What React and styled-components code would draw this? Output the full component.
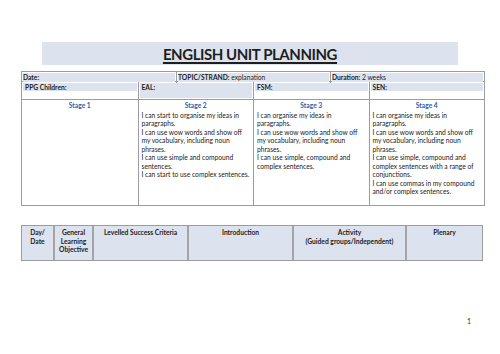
import styled, { createGlobalStyle } from "styled-components";

const GlobalStyle = createGlobalStyle`
  html, body {
    margin: 0;
    padding: 0;
    background: #fff;
  }
  body {
    font-family: Lato, "Liberation Sans", sans-serif;
    color: #222;
  }
`;

const SHADE = "#dce3ef";
const LINE = "#9c9c9c";

const Page = styled.div`
  width: 500px;
  height: 354px;
  box-sizing: border-box;
  padding: 42px 15px 0 21px;
  display: flex;
  flex-direction: column;
`;

const TitleBar = styled.div`
  margin-left: 21px;
  width: 416px;
  height: 23px;
  background: ${SHADE};
  display: flex;
  align-items: center;
  justify-content: center;
`;

const Title = styled.h1`
  margin: 0;
  font-size: 15px;
  font-weight: 700;
  color: #1e1e1e;
  text-decoration: underline;
  text-decoration-thickness: 1.5px;
  text-underline-offset: 2px;
  letter-spacing: -0.45px;
`;

const TopTable = styled.div`
  margin-top: 6px;
  width: 464px;
  box-sizing: border-box;
  border: 1px solid ${LINE};
  font-size: 6.7px;
  line-height: 8.5px;
`;

const Row = styled.div`
  display: grid;
  grid-template-columns: repeat(${({ $cols }) => $cols}, 1fr);
  height: ${({ $h }) => $h}px;
  & + & {
    border-top: 1px solid ${LINE};
  }
`;

const Cell = styled.div`
  box-sizing: border-box;
  padding: 1px;
  background: ${({ $fill }) => ($fill ? SHADE : "transparent")};
  background-clip: content-box;
  & + & {
    border-left: 1px solid ${LINE};
  }
`;

const ShadeLine = styled.div`
  background: ${SHADE};
  padding: 0 2px;
  height: 8px;
  line-height: 8px;
  white-space: nowrap;
`;

const FullShade = styled.div`
  background: ${SHADE};
  height: 100%;
  padding: 0 2px;
  line-height: 8px;
`;

const Label = styled.b`
  font-weight: 700;
`;

const StageCell = styled.div`
  box-sizing: border-box;
  padding: 1px 3px;
  & + & {
    border-left: 1px solid ${LINE};
  }
`;

const StageHead = styled.div`
  text-align: center;
  font-weight: 700;
  color: #2e5ea8;
  margin-bottom: 1px;
`;

const TextLine = styled.div`
  white-space: nowrap;
`;

const BottomTable = styled.div`
  margin-top: 19px;
  width: 462px;
  height: 36px;
  box-sizing: border-box;
  border: 1px solid ${LINE};
  display: grid;
  grid-template-columns: 31px 39px 95px 105px 113px 1fr;
  font-size: 6.7px;
  line-height: 8.5px;
`;

const HeadCell = styled.div`
  background: ${SHADE};
  font-weight: 700;
  text-align: center;
  padding: 2px 2px 0;
  & + & {
    border-left: 2px solid #a4a4a4;
  }
`;

const PageNumber = styled.div`
  margin-top: 56px;
  align-self: flex-end;
  margin-right: 14px;
  font-size: 7px;
  color: #333;
`;

const stages = [
  { title: "Stage 1", lines: [] },
  {
    title: "Stage 2",
    lines: [
      "I can start to organise my ideas in",
      "paragraphs.",
      "I can use wow words and show off",
      "my vocabulary, including noun",
      "phrases.",
      "I can use simple and compound",
      "sentences.",
      "I can start to use complex sentences.",
    ],
  },
  {
    title: "Stage 3",
    lines: [
      "I can organise my ideas in",
      "paragraphs.",
      "I can use wow words and show off",
      "my vocabulary, including noun",
      "phrases.",
      "I can use simple, compound and",
      "complex sentences.",
    ],
  },
  {
    title: "Stage 4",
    lines: [
      "I can organise my ideas in",
      "paragraphs.",
      "I can use wow words and show off",
      "my vocabulary, including noun",
      "phrases.",
      "I can use simple, compound and",
      "complex sentences with a range of",
      "conjunctions.",
      "I can use commas in my compound",
      "and/or complex sentences.",
    ],
  },
];

const headers = [
  ["Day/", "Date"],
  ["General", "Learning", "Objective"],
  ["Levelled Success Criteria"],
  ["Introduction"],
  ["Activity", "(Guided groups/Independent)"],
  ["Plenary"],
];

export default function App() {
  return (
    <>
      <GlobalStyle />
      <Page>
        <TitleBar>
          <Title>ENGLISH UNIT PLANNING</Title>
        </TitleBar>

        <TopTable>
          <Row $cols={3} $h={9}>
            <Cell $fill>
              <Label>Date:</Label>
            </Cell>
            <Cell $fill>
              <Label>TOPIC/STRAND:</Label> explanation
            </Cell>
            <Cell $fill>
              <Label>Duration:</Label> 2 weeks
            </Cell>
          </Row>
          <Row $cols={4} $h={17}>
            <Cell>
              <ShadeLine>
                <Label>PPG Children:</Label>
              </ShadeLine>
            </Cell>
            <Cell>
              <FullShade>
                <Label>EAL:</Label>
              </FullShade>
            </Cell>
            <Cell>
              <ShadeLine>
                <Label>FSM:</Label>
              </ShadeLine>
            </Cell>
            <Cell>
              <ShadeLine>
                <Label>SEN:</Label>
              </ShadeLine>
            </Cell>
          </Row>
          <Row $cols={4} $h={105}>
            {stages.map((s) => (
              <StageCell key={s.title}>
                <StageHead>{s.title}</StageHead>
                {s.lines.map((l, i) => (
                  <TextLine key={i}>{l}</TextLine>
                ))}
              </StageCell>
            ))}
          </Row>
        </TopTable>

        <BottomTable>
          {headers.map((h, i) => (
            <HeadCell key={i}>
              {h.map((t) => (
                <div key={t}>{t}</div>
              ))}
            </HeadCell>
          ))}
        </BottomTable>

        <PageNumber>1</PageNumber>
      </Page>
    </>
  );
}
